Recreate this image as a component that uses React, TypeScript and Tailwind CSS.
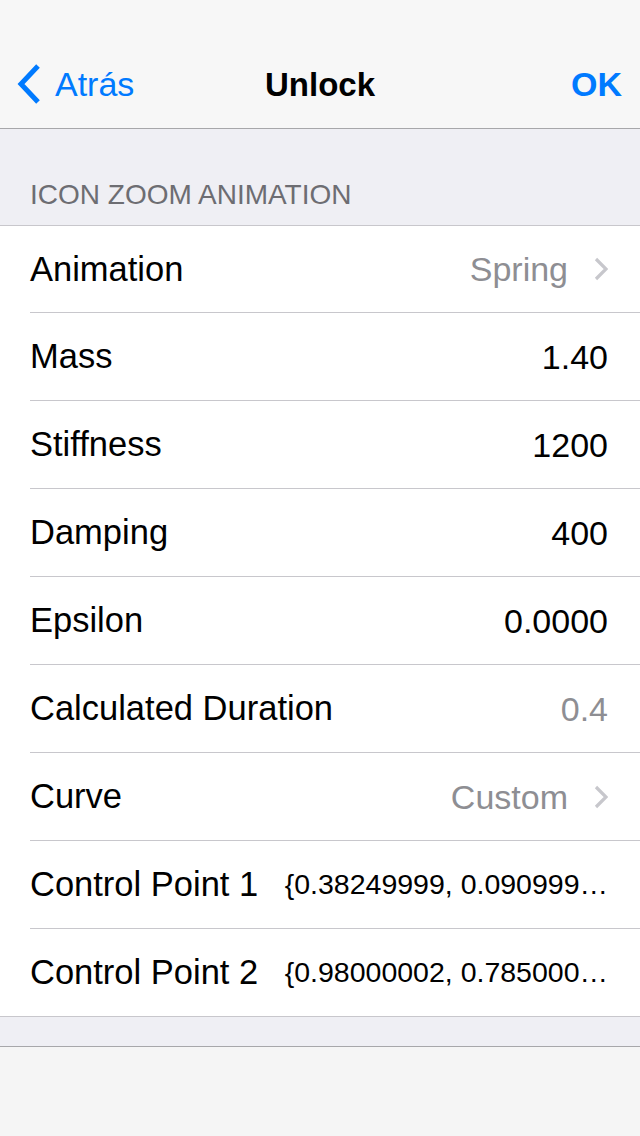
import React from "react";

type Row = {
  label: string;
  value: string;
  muted?: boolean;
  chevron?: boolean;
  small?: boolean;
};

const rows: Row[] = [
  { label: "Animation", value: "Spring", muted: true, chevron: true },
  { label: "Mass", value: "1.40" },
  { label: "Stiffness", value: "1200" },
  { label: "Damping", value: "400" },
  { label: "Epsilon", value: "0.0000" },
  { label: "Calculated Duration", value: "0.4", muted: true },
  { label: "Curve", value: "Custom", muted: true, chevron: true },
  { label: "Control Point 1", value: "{0.38249999, 0.090999…", small: true },
  { label: "Control Point 2", value: "{0.98000002, 0.785000…", small: true },
];

function Chevron({ className }: { className?: string }) {
  return (
    <svg width="14" height="24" viewBox="0 0 14 24" className={className}>
      <path d="M2 2 L12 12 L2 22" fill="none" stroke="currentColor" strokeWidth="3.2" />
    </svg>
  );
}

export default function App() {
  return (
    <div
      className="w-[640px] h-[1136px] flex flex-col bg-[#efeff4] overflow-hidden"
      style={{ fontFamily: '"Liberation Sans", Arial, sans-serif' }}
    >
      {/* barre de navigation */}
      <header className="h-[129px] shrink-0 bg-[#f7f7f7] border-b border-[#a7a7aa] pt-[40px]">
        <div className="h-[88px] flex items-center justify-between relative">
          <div className="flex items-center text-[#007aff] pl-[17px]">
            <svg width="24" height="40" viewBox="0 0 24 40" className="mr-[14px]">
              <path d="M21 2 L4 20 L21 38" fill="none" stroke="currentColor" strokeWidth="5" />
            </svg>
            <span className="text-[34px] leading-none">Atrás</span>
          </div>
          <h1 className="absolute left-0 right-0 text-center text-[33px] font-bold leading-none text-black pointer-events-none">
            Unlock
          </h1>
          <span className="text-[34px] font-bold leading-none text-[#007aff] pr-[18px]">OK</span>
        </div>
      </header>

      {/* section */}
      <div className="h-[96px] shrink-0 flex items-end pl-[30px] pb-[16px]">
        <span className="text-[28px] leading-none text-[#6d6d72]">ICON ZOOM ANIMATION</span>
      </div>

      <div className="bg-white border-t border-b border-[#c8c7cc]">
        {rows.map((r, i) => {
          const first = i === 0;
          const last = i === rows.length - 1;
          return (
            <div key={r.label} className="pl-[30px]">
              <div
                className={
                  "flex items-center justify-between pr-[32px] " +
                  (first || last ? "h-[87px] " : "h-[88px] ") +
                  (last ? "" : "border-b border-[#c8c7cc]")
                }
              >
                <span className="text-[34.5px] leading-none text-black whitespace-nowrap">{r.label}</span>
                <div className="flex items-center">
                  <span
                    className={
                      r.small
                        ? "text-[28.5px] leading-none text-black whitespace-nowrap"
                        : r.muted
                        ? "text-[34px] leading-none text-[#8e8e93]"
                        : "text-[34px] leading-none text-black"
                    }
                  >
                    {r.value}
                  </span>
                  {r.chevron && <Chevron className="ml-[26px] text-[#c7c7cc]" />}
                </div>
              </div>
            </div>
          );
        })}
      </div>

      <div className="h-[29px] shrink-0" />

      {/* barre du bas */}
      <footer className="flex-1 bg-[#f5f5f5] border-t border-[#a7a7aa]" />
    </div>
  );
}
